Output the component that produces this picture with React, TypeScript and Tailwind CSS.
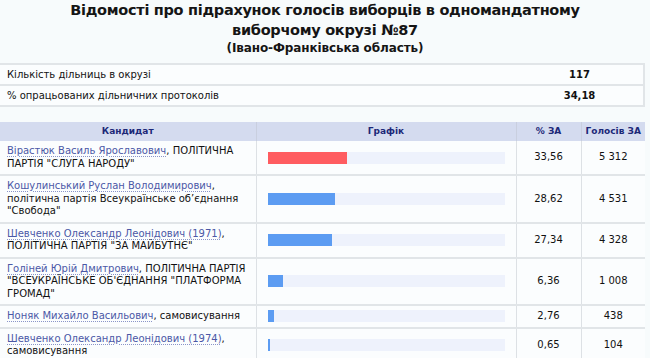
import React from "react";

interface Row {
  name: string;
  party: string;
  pct: number;
  pctText: string;
  votes: string;
  lead?: boolean;
}

const rows: Row[] = [
  { name: "Вірастюк Василь Ярославович", party: 'ПОЛІТИЧНА ПАРТІЯ "СЛУГА НАРОДУ"', pct: 33.56, pctText: "33,56", votes: "5 312", lead: true },
  { name: "Кошулинський Руслан Володимирович", party: 'політична партія Всеукраїнське об’єднання "Свобода"', pct: 28.62, pctText: "28,62", votes: "4 531" },
  { name: "Шевченко Олександр Леонідович (1971)", party: 'ПОЛІТИЧНА ПАРТІЯ "ЗА МАЙБУТНЄ"', pct: 27.34, pctText: "27,34", votes: "4 328" },
  { name: "Голіней Юрій Дмитрович", party: 'ПОЛІТИЧНА ПАРТІЯ "ВСЕУКРАЇНСЬКЕ ОБ\'ЄДНАННЯ "ПЛАТФОРМА ГРОМАД"', pct: 6.36, pctText: "6,36", votes: "1 008" },
  { name: "Ноняк Михайло Васильович", party: "самовисування", pct: 2.76, pctText: "2,76", votes: "438" },
  { name: "Шевченко Олександр Леонідович (1974)", party: "самовисування", pct: 0.65, pctText: "0,65", votes: "104" },
];

const font = { fontFamily: "'DejaVu Sans', Verdana, sans-serif" };

export default function App() {
  return (
    <div className="w-[650px] h-[358px] overflow-hidden bg-[#f7fbfc] text-[#111]" style={font}>
      <div className="text-center font-bold">
        <h1 className="text-[14.5px] leading-[20px] tracking-[-0.3px] text-[#151515]">
          Відомості про підрахунок голосів виборців в одномандатному
          <br />
          виборчому окрузі №87
        </h1>
        <div className="mt-[1px] text-[12px] leading-[14px] tracking-[-0.1px] text-[#151515]">(Івано-Франківська область)</div>
      </div>

      <table className="mt-[8px] w-[645px] border-collapse text-[10px] leading-[13px] bg-[#fbfdfe]">
        <tbody>
          <tr className="border-y-2 border-[#e1e5e8]">
            <td className="w-[516px] h-[21px] px-[7px]">Кількість дільниць в окрузі</td>
            <td className="text-center font-bold border-r-2 border-[#e1e5e8]">117</td>
          </tr>
          <tr className="border-b-2 border-[#e1e5e8]">
            <td className="h-[21px] px-[7px]">% опрацьованих дільничних протоколів</td>
            <td className="text-center font-bold border-r-2 border-[#e1e5e8]">34,18</td>
          </tr>
        </tbody>
      </table>

      <table className="mt-[15px] w-[645px] border-collapse text-[10px] leading-[12.5px] bg-[#fbfdfe]">
        <thead>
          <tr className="bg-[#d4dbef] text-[#1c2878] text-[9px] font-bold">
            <th className="w-[256px] h-[19px] border-r border-[#c9cfdf]">Кандидат</th>
            <th className="w-[260px] border-r border-[#c9cfdf]">Графік</th>
            <th className="w-[65px] border-r border-[#c9cfdf]">% ЗА</th>
            <th className="w-[64px]">Голосів ЗА</th>
          </tr>
        </thead>
        <tbody>
          {rows.map((r) => (
            <tr key={r.name} className="border-b-2 border-[#e1e5e8]">
              <td className="px-[7px] py-[4px] align-middle border-r border-[#dde1e5]">
                <span className="text-[#4b58a6] underline decoration-dotted decoration-[#8a94c8] underline-offset-2">
                  {r.name}
                </span>
                , {r.party}
              </td>
              <td className="px-[11px] border-r border-[#dde1e5]">
                <div className="h-[12px] bg-[#eef2fc]">
                  <div
                    className={r.lead ? "h-full bg-[#ff5c60]" : "h-full bg-[#5c9cf2]"}
                    style={{ width: `${Math.max(r.pct, 0.9)}%` }}
                  />
                </div>
              </td>
              <td className="text-center border-r border-[#dde1e5]">{r.pctText}</td>
              <td className="text-center">{r.votes}</td>
            </tr>
          ))}
        </tbody>
      </table>
    </div>
  );
}
